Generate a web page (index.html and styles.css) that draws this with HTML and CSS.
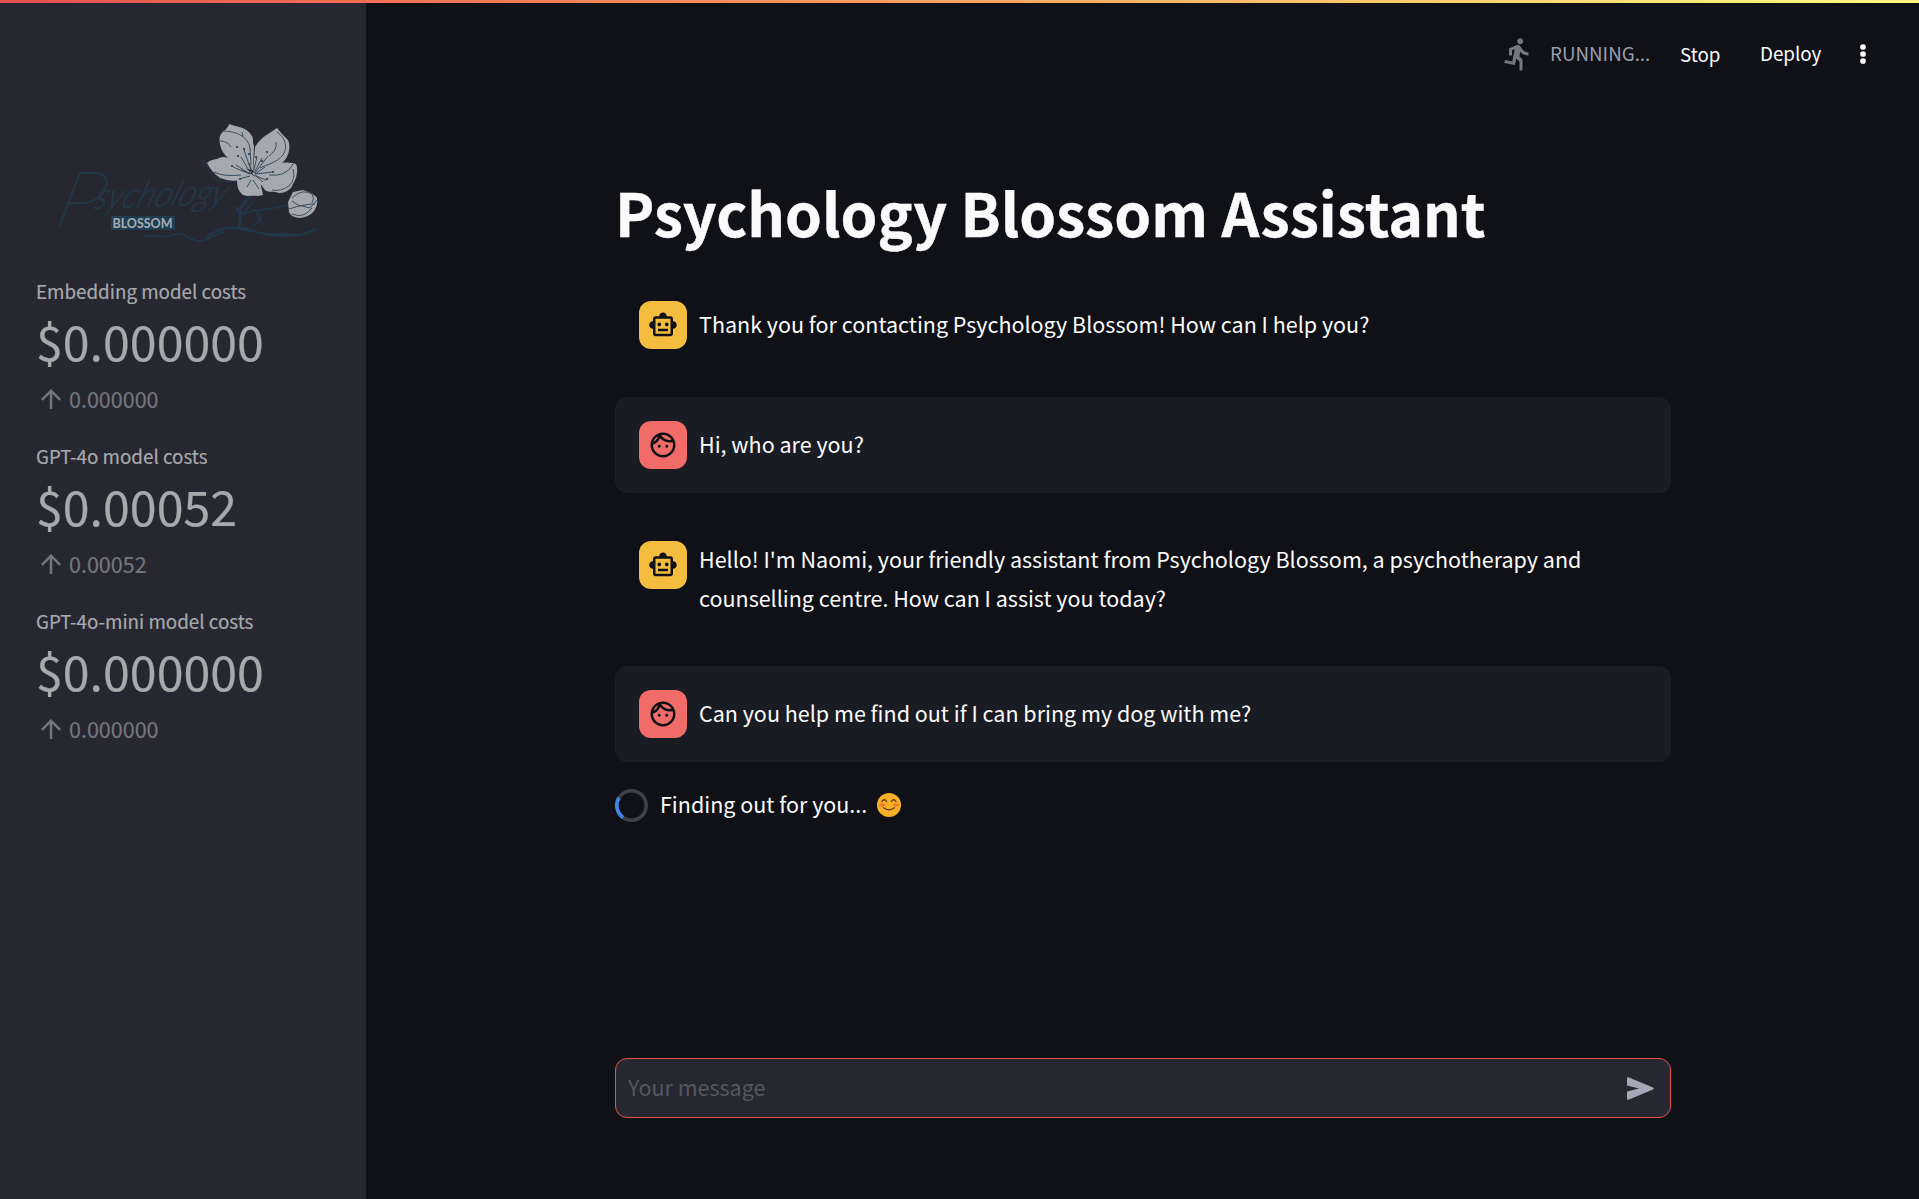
FILE: index.html
```html
<!DOCTYPE html>
<html lang="en">
<head>
<meta charset="utf-8">
<title>Psychology Blossom Assistant</title>
<link rel="stylesheet" href="styles.css">
</head>
<body>
<svg class="defs" width="0" height="0">
  <symbol id="bot" viewBox="0 0 24 24"><path d="M20 9V7c0-1.100-.9-2-2-2h-3c0-1.660-1.340-3-3-3S9 3.340 9 5H6c-1.100 0-2 .9-2 2v2c-1.660 0-3 1.340-3 3s1.340 3 3 3v4c0 1.100.9 2 2 2h12c1.100 0 2-.9 2-2v-4c1.660 0 3-1.340 3-3s-1.340-3-3-3zm-2 10H6V7h12v12zm-9-6c-.83 0-1.500-.67-1.500-1.500S8.170 10 9 10s1.500.67 1.500 1.500S9.830 13 9 13zm7.500-1.500c0 .83-.67 1.500-1.500 1.500s-1.500-.67-1.500-1.500.67-1.500 1.500-1.500 1.500.67 1.500 1.500zM8 15h8v2H8v-2z"/></symbol>
  <symbol id="face" viewBox="0 0 24 24"><path d="M10.250 13c0 .69-.56 1.250-1.250 1.250S7.750 13.690 7.750 13s.56-1.250 1.250-1.250 1.250.56 1.250 1.250zM15 11.750c-.69 0-1.250.56-1.250 1.250s.56 1.250 1.250 1.250 1.250-.56 1.250-1.250-.56-1.250-1.250-1.250zm7 .25c0 5.520-4.480 10-10 10S2 17.520 2 12 6.480 2 12 2s10 4.480 10 10zM10.660 4.120C12.060 6.440 14.600 8 17.500 8c.46 0 .91-.05 1.340-.12C17.440 5.560 14.900 4 12 4c-.46 0-.91.05-1.340.12zM4.420 9.470c1.710-.97 3.030-2.550 3.660-4.440C6.370 6 5.050 7.580 4.420 9.470zM20 12c0-.78-.12-1.530-.33-2.240-.7.150-1.420.24-2.170.24-3.130 0-5.920-1.440-7.760-3.690C8.690 8.870 6.600 10.880 4 11.860c.01.04 0 .09 0 .14 0 4.410 3.590 8 8 8s8-3.590 8-8z"/></symbol>
  <symbol id="up" viewBox="0 0 24 24"><path d="M4 12l1.410 1.410L11 7.830V20h2V7.830l5.580 5.590L20 12l-8-8-8 8z"/></symbol>
</svg>
<div class="topline"></div>
<div class="app">
  <aside class="sidebar">
    <svg class="logo" viewBox="30 110 310 150">
      <g class="ink">
        <path d="M143 237c12-5 16 3 30-2s16 9 32 5c10-3 11-7 19-8"/>
        <path class="branch" d="M205 239c14-12 21-13 40-9 12 1 20 6 34 4l22 1 16-6M216 231q22-7 38 0t46 4"/>
        <path class="twig" d="M239 228c4-12-3-14 3-22l7-9M242 215l-6-8"/>
        <path d="M253 202l-11 13M243 215c10-7 25-4 45-10m-35 5q8-1 8 10l-9 6m3-17 6 14"/>
        <path d="M202 160c5 2 4 7 10 15s14 7 20 6"/>
      </g>
      <g class="script">
        <text class="script-cap" transform="translate(52 227) skewX(-14)" textLength="46" lengthAdjust="spacingAndGlyphs">P</text>
        <text transform="translate(92 209) rotate(-2) skewX(-22)" textLength="132" lengthAdjust="spacingAndGlyphs">sychology</text>
      </g>
      <rect class="tag" x="111" y="216" width="64" height="14"/>
      <text class="tag-text" x="112.500" y="227.700" textLength="60">BLOSSOM</text>
      <g class="petal">
        <path d="M229 124c8 3 18 3 23 12 2 3 0 6 2 10l-1 24c-9-1-14-4-20-8-6-5-10-8-12-14-2-6-2-11 0-14s7-5 8-10z"/>
        <path d="M277 128l5 6 6 6c3 7 1 14-3 20-5 6-11 9-18 10l-14 3 2-26c3-5 6-8 10-11s8-5 12-8z"/>
        <path d="M207 163c4-4 8-3 12-5s8-1 12 1l20 13-4 9-9-1c-5 2-12 0-18-2-6-4-10-9-13-15z"/>
        <path d="M252 173l20-8c6-3 16-3 24-1 2 5 1 9 0 14l-5 10c-3 3-7 5-12 5-5-2-10 0-14-3z"/>
        <path d="M237 180l13-7 10 8 3 14-5 1c-5-1-10 1-15-1-5-4-6-9-6-15z"/>
        <path d="M288 202l5-10 10-2c6 2 10 3 14 8 1 6-1 12-6 16-6 5-18 6-22-2z"/>
      </g>
      <g class="vein">
        <path d="M222 131c12 0 26 4 28 17l1 17M220 141c4 0 9 2 11 6M242 132l1 4M277 132c10 7 10 17 6 23-7 8-15 9-23 13M276 142q1 9-7 14M214 172q10 5 27 3M269 175q16 2 23-9l1-2M293 169q3 10-4 17-9 6-17 4M251 180l-4 7M253 180l6 9M292 201l6 4 12 3 7-8M292 198q10-10 20-4 3 4 0 9M289 209q15-5 26-5M292 214q12 5 20-6"/>
        <path class="stamen" d="M252 173l-8-23M251 174l-10-17M250 174l-14-9M250 174l-17-7M253 173l4-16M254 173l8-15M255 173l13-17M255 174l18-2M254 175l12 5M250 176l-11 3M255 174l10-7M252 171l-3-8M249 173l-8-3M256 176l7 6"/>
        <path class="pollen" d="M244 149h.1M238 156h.1M232 166h.1M237 147h.1M249 154h.1M256 157h.1M267 152h.1M273 172h.1M267 179h.1M262 161h.1M240 179h.1"/>
      </g>
    </svg>
    <section class="metric">
      <div class="metric-label">Embedding model costs</div>
      <div class="metric-value">$0.000000</div>
      <div class="metric-delta"><svg><use href="#up"/></svg><span>0.000000</span></div>
    </section>
    <section class="metric">
      <div class="metric-label">GPT-4o model costs</div>
      <div class="metric-value">$0.00052</div>
      <div class="metric-delta"><svg><use href="#up"/></svg><span>0.00052</span></div>
    </section>
    <section class="metric">
      <div class="metric-label">GPT-4o-mini model costs</div>
      <div class="metric-value">$0.000000</div>
      <div class="metric-delta"><svg><use href="#up"/></svg><span>0.000000</span></div>
    </section>
  </aside>
  <div class="page">
    <header class="toolbar">
      <svg class="runner" viewBox="0 0 24 24"><path d="M13.490 5.480c1.100 0 2-.9 2-2s-.9-2-2-2-2 .9-2 2 .9 2 2 2zm-3.600 13.900l1-4.400 2.100 2v6h2v-7.500l-2.100-2 .6-3c1.300 1.500 3.300 2.500 5.500 2.500v-2c-1.900 0-3.500-1-4.300-2.400l-1-1.600c-.4-.6-1-1-1.700-1-.3 0-.5.1-.8.1l-5.200 2.200v4.700h2v-3.400l1.800-.7-1.600 8.100-4.900-1-.4 2 7 1.400z"/></svg>
      <span class="status">RUNNING...</span>
      <span class="stop">Stop</span>
      <span class="deploy">Deploy</span>
      <svg class="dots" viewBox="0 0 6 20"><circle cx="3" cy="3" r="2.850"/><circle cx="3" cy="10" r="2.850"/><circle cx="3" cy="17" r="2.850"/></svg>
    </header>
    <main class="chat">
      <h1>Psychology Blossom Assistant</h1>
      <div class="message">
        <div class="avatar bot"><svg><use href="#bot"/></svg></div>
        <p>Thank you for contacting Psychology Blossom! How can I help you?</p>
      </div>
      <div class="message user">
        <div class="avatar"><svg><use href="#face"/></svg></div>
        <p>Hi, who are you?</p>
      </div>
      <div class="message tall">
        <div class="avatar bot"><svg><use href="#bot"/></svg></div>
        <p>Hello! I'm Naomi, your friendly assistant from Psychology Blossom, a psychotherapy and<br>counselling centre. How can I assist you today?</p>
      </div>
      <div class="message user">
        <div class="avatar"><svg><use href="#face"/></svg></div>
        <p>Can you help me find out if I can bring my dog with me?</p>
      </div>
      <div class="waiting">
        <svg class="spinner" viewBox="0 0 33 33"><circle cx="16.500" cy="16.500" r="14.700"/><path d="M4 8.800A14.700 14.700 0 0 0 8 28.500"/></svg>
        <span>Finding out for you...</span>
        <svg class="smile" viewBox="0 0 24 24"><circle class="skin" cx="12" cy="12" r="12"/><ellipse class="blush" cx="5" cy="12" rx="3" ry="1.800"/><ellipse class="blush" cx="19" cy="12" rx="3" ry="1.800"/><path d="M5 8.500q2.300-3.500 4.600 0M14.400 8.500q2.300-3.500 4.600 0M6.500 14.800q5.500 4 11 0"/></svg>
      </div>
    </main>
    <div class="composer">
      <span>Your message</span>
      <svg viewBox="0 0 27 23"><path d="M0 1.500Q0 0 1.500.3L26 10.500q1.500 1 0 2L1.500 22.700Q0 23 0 21.500V14.500L12 11.500 0 8.500z"/></svg>
    </div>
  </div>
</div>
</body>
</html>
```
FILE: styles.css
```css
* { box-sizing: border-box; }
body {
  margin: 0;
  background: #0f1116;
  color: #fafafa;
  font-family: "Noto Sans CJK SC", "Noto Sans", sans-serif;
  font-size: 21.5px;
}
.defs { position: absolute; }
.topline { height: 3px; background: linear-gradient(90deg, #e8504f, #f9a35f 50%, #fbfb80); }
.app { display: flex; height: 1196px; }

.sidebar { width: 366px; background: #262730; padding: 107px 0 0 30px; }
.logo { display: block; width: 310px; height: 150px; margin-bottom: 14px; }
.ink path { fill: none; stroke: #203649; stroke-width: 1.5; }
.ink .branch { stroke-width: 2; }
.ink .twig { stroke-width: 3; }
.script { fill: #21384b; stroke: #21384b; stroke-width: .4; font: italic 300 36px Lato, sans-serif; }
.script-cap { font-size: 78px; font-weight: 100; stroke-width: .8; }
.tag { fill: #203c50; }
.tag-text { fill: #a6adb5; font: 700 12.5px Lato, sans-serif; }
.petal path { fill: #a5a9af; }
.vein path { fill: none; stroke: #3b4e60; stroke-width: 1; }
.vein .stamen { stroke: #2b4256; stroke-width: .9; }
.vein .pollen { stroke: #2b4256; stroke-width: 2.2; stroke-linecap: round; }

.metric { height: 165px; padding-left: 6px; }
.metric-label { height: 29px; line-height: 33px; font-size: 18.8px; color: #a8a9ac; white-space: nowrap; -webkit-text-stroke: .2px #a8a9ac; }
.metric-value { height: 77px; line-height: 75px; font-size: 48.3px; color: #a8a9ac; -webkit-text-stroke: .2px #a8a9ac; }
.metric-delta { height: 37px; display: flex; align-items: center; gap: 3px; line-height: 36px; color: #75767d; -webkit-text-stroke: .2px #75767d; }
.metric-delta svg { width: 30px; height: 30px; fill: currentColor; }

.page { flex: 1; display: flex; flex-direction: column; padding-bottom: 81px; }
.toolbar { height: 102px; display: flex; align-items: center; padding: 0 49px 0 1134px; white-space: nowrap; }
.toolbar span { line-height: 36px; font-size: 18.8px; padding-bottom: 2px; }
.runner { width: 36px; height: 36px; fill: #77787d; }
.toolbar .status { width: 130px; margin-left: 14px; color: #9b9eac; }
.toolbar .stop { width: 80px; padding-bottom: 0; }
.toolbar .deploy { width: 100px; }
.dots { width: 6px; height: 20px; fill: #fafafa; }

.chat { width: 1056px; margin-left: 249px; flex: 1; }
h1 { height: 134px; margin: 0 0 38px; padding-top: 67px; line-height: 79px; font-size: 59px; font-weight: 700; white-space: nowrap; -webkit-text-stroke: .4px #fafafa; }
.message { height: 96px; margin-bottom: 24px; padding: 24px; display: flex; gap: 12px; border-radius: 12px; }
.message.tall { height: 125px; }
.message.user { background: #1a1c24; }
.avatar { width: 48px; height: 48px; flex: none; display: grid; place-items: center; border-radius: 12px; background: #f16c69; fill: #0f1116; }
.avatar.bot { background: #f4bd40; }
.avatar svg { width: 30px; height: 30px; }
.message p { margin: 3px 0 0; line-height: 39px; white-space: nowrap; }
.message.tall p { margin-top: -2px; }
.waiting { height: 39px; display: flex; align-items: center; }
.waiting span { padding-bottom: 5px; }
.spinner { width: 33px; height: 33px; margin-right: 12px; fill: none; stroke: #404146; stroke-width: 3.6; }
.spinner path { stroke: #4285e8; }
.smile { width: 24px; height: 24px; margin: 0 0 2px 10px; fill: none; stroke: #5c341b; stroke-width: 1.3; stroke-linecap: round; }
.smile .skin { fill: #f6b026; stroke: none; }
.smile .blush { fill: #f47b2c; stroke: none; }

.composer { width: 1056px; height: 60px; margin-left: 249px; padding: 0 16px 0 12px; display: flex; align-items: center; justify-content: space-between; background: #262730; border: 1px solid #ef4e4b; border-radius: 12px; color: #565763; }
.composer span { padding-bottom: 3px; }
.composer svg { width: 27px; height: 23px; fill: #a5a8b8; }
```
